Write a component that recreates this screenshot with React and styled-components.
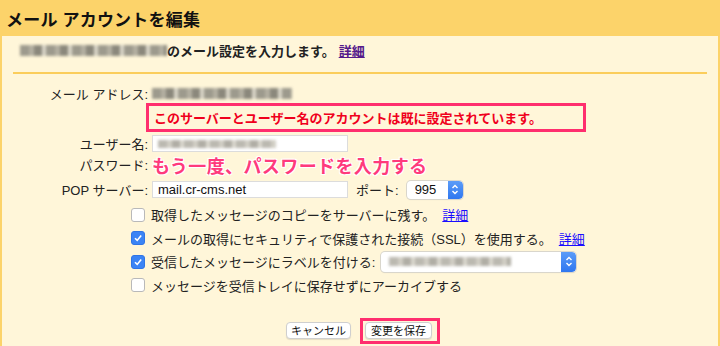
import React from 'react';
import styled, { createGlobalStyle } from 'styled-components';

const GlobalStyle = createGlobalStyle`
	html, body {
		margin: 0;
		padding: 0;
		background: #fff6d9;
	}
	body {
		width: 720px;
		height: 346px;
		overflow: hidden;
		font-family: 'Liberation Sans', 'Noto Sans CJK JP', sans-serif;
		color: #222;
	}
`;

const Page = styled.div`
	width: 720px;
	height: 346px;
	display: flex;
	flex-direction: column;
	background: #fcd36a;
`;

const Header = styled.h1`
	margin: 0;
	height: 36px;
	padding: 0 6px;
	display: flex;
	align-items: center;
	font-size: 17px;
	font-weight: 700;
	color: #111;
	letter-spacing: 0.2px;
`;

const Body = styled.div`
	flex: 1;
	margin: 0 2px;
	background: #fff6d9;
	display: flex;
	flex-direction: column;
`;

const Intro = styled.div`
	height: 28px;
	padding: 0 0 8px 18px;
	display: flex;
	align-items: center;
	font-size: 13px;
	font-weight: 700;
`;

const DetailLink = styled.a`
	color: ${({ visited }) => (visited ? '#551a8b' : '#1a0dff')};
	text-decoration: underline;
	margin-left: ${({ tight }) => (tight ? 1 : 4)}px;
	font-weight: ${({ bold }) => (bold ? 700 : 400)};
	cursor: pointer;
`;

const Rule = styled.hr`
	margin: 0 11px;
	height: 2px;
	border: none;
	background: #fbcd5b;
`;

const Blur = styled.span`
	display: inline-block;
	width: ${({ w }) => w}px;
	height: ${({ h }) => h || 10}px;
	background: repeating-linear-gradient(
		90deg,
		${({ dark }) => (dark ? '#8c8a80' : '#b0ada3')} 0 9px,
		${({ dark }) => (dark ? '#a7a498' : '#c9c6bb')} 9px 14px,
		${({ dark }) => (dark ? '#77756c' : '#a3a096')} 14px 22px,
		#d4d1c6 22px 26px
	);
	filter: blur(1.4px);
	opacity: 0.85;
`;

const Form = styled.div`
	display: grid;
	grid-template-columns: 146px 1fr;
	column-gap: 4px;
	padding-top: 10px;
	font-size: 13px;
`;

const Label = styled.div`
	grid-column: 1;
	height: ${({ h }) => h}px;
	display: flex;
	align-items: center;
	justify-content: flex-end;
	white-space: nowrap;
`;

const Value = styled.div`
	grid-column: 2;
	height: ${({ h }) => h}px;
	display: flex;
	align-items: center;
	gap: 8px;
`;

const Warning = styled.div`
	grid-column: 2;
	margin: 1px 0 2px -6px;
	width: 429px;
	height: 23px;
	border: 3px solid #ff2e6e;
	background: #fff6d9;
	display: flex;
	align-items: center;
	padding-left: 5px;
	font-size: 13px;
	font-weight: 700;
	color: #f0001c;
	box-sizing: content-box;
`;

const TextInput = styled.div`
	width: ${({ w }) => w}px;
	height: 17px;
	background: #fff;
	border: 1px solid #dcdcdc;
	box-sizing: border-box;
	display: flex;
	align-items: center;
	padding-left: 5px;
	font-size: 13px;
	color: #111;
`;

const Hint = styled.div`
	font-size: 18px;
	font-weight: 700;
	color: #ff3a7c;
	letter-spacing: 0.4px;
	text-shadow: 0 0 2px #fff, 1px 1px 0 #fff, -1px -1px 0 #fff, 1px -1px 0 #fff, -1px 1px 0 #fff;
`;

const Select = styled.div`
	width: ${({ w }) => w}px;
	height: ${({ h }) => h}px;
	background: #fff;
	border-radius: 4px;
	box-shadow: 0 0 0 1px #d9d6cc, 0 1px 1px rgba(0, 0, 0, 0.12);
	display: flex;
	align-items: center;
	justify-content: space-between;
	padding-left: 8px;
	box-sizing: border-box;
	font-size: 13px;
	color: #111;
	overflow: hidden;
`;

const Stepper = styled.span`
	width: 15px;
	height: 100%;
	background: linear-gradient(#5b9cf8, #2f77f0);
	display: flex;
	align-items: center;
	justify-content: center;
	border-radius: 0 4px 4px 0;
`;

const Port = styled.span`
	white-space: nowrap;
`;

const Options = styled.div`
	display: flex;
	flex-direction: column;
	padding-left: 129px;
	font-size: 13px;
`;

const OptionRow = styled.label`
	height: 23.5px;
	display: flex;
	align-items: center;
	gap: 6px;
	white-space: nowrap;
`;

const Box = styled.span`
	width: 14px;
	height: 14px;
	border-radius: 3px;
	box-sizing: border-box;
	background: ${({ checked }) => (checked ? '#3b84f5' : '#fff')};
	border: 1px solid ${({ checked }) => (checked ? '#2f75e6' : '#b9b9b9')};
	display: flex;
	align-items: center;
	justify-content: center;
	flex-shrink: 0;
`;

const Actions = styled.div`
	margin-top: auto;
	display: flex;
	justify-content: center;
	align-items: center;
	gap: 9px;
	padding-left: 6px;
	height: 27px;
	margin-bottom: 2px;
`;

const Button = styled.button`
	height: 17px;
	padding: 0 ${({ pad }) => pad}px;
	background: #fff;
	border: 1px solid #cfcfcf;
	border-radius: 4px;
	font-family: 'Noto Sans CJK JP', sans-serif;
	font-size: 11px;
	color: #111;
	line-height: 15px;
	box-shadow: 0 1px 1px rgba(0, 0, 0, 0.1);
`;

const Highlight = styled.div`
	border: 3px solid #ff2e6e;
	padding: 0 5px 0 2px;
	height: 20px;
	display: flex;
	align-items: center;
`;

const Chevrons = () => (
	<svg width="8" height="11" viewBox="0 0 8 11" fill="none" stroke="#fff" strokeWidth="1.4">
		<path d="M1.5 4 L4 1.5 L6.5 4" />
		<path d="M1.5 7 L4 9.5 L6.5 7" />
	</svg>
);

const Check = () => (
	<svg width="10" height="10" viewBox="0 0 10 10" fill="none" stroke="#fff" strokeWidth="1.6">
		<path d="M2 5.2 L4.2 7.4 L8.2 2.4" />
	</svg>
);

const Checkbox = ({ checked }) => <Box checked={checked}>{checked && <Check />}</Box>;

const options = [
	{ checked: false, text: '取得したメッセージのコピーをサーバーに残す。', link: true },
	{ checked: true, text: 'メールの取得にセキュリティで保護された接続（SSL）を使用する。', link: true },
	{ checked: true, text: '受信したメッセージにラベルを付ける:', select: true },
	{ checked: false, text: 'メッセージを受信トレイに保存せずにアーカイブする' },
];

const App = () => (
	<Page>
		<GlobalStyle />
		<Header>メール アカウントを編集</Header>
		<Body>
			<Intro>
				<Blur w={147} h={11} dark />
				<span>のメール設定を入力します。</span>
				<DetailLink visited bold>詳細</DetailLink>
			</Intro>
			<Rule />
			<Form>
				<Label h={18}>メール アドレス:</Label>
				<Value h={18}>
					<Blur w={140} h={11} dark />
				</Value>
				<Warning>このサーバーとユーザー名のアカウントは既に設定されています。</Warning>
				<Label h={19}>ユーザー名:</Label>
				<Value h={19}>
					<TextInput w={196}>
						<Blur w={118} h={8} />
					</TextInput>
				</Value>
				<Label h={23}>パスワード:</Label>
				<Value h={23}>
					<Hint>もう一度、パスワードを入力する</Hint>
				</Value>
				<Label h={27}>POP サーバー:</Label>
				<Value h={27}>
					<TextInput w={196}>mail.cr-cms.net</TextInput>
					<Port>ポート:</Port>
					<Select w={56} h={18}>
						995
						<Stepper>
							<Chevrons />
						</Stepper>
					</Select>
				</Value>
			</Form>
			<Options>
				{options.map(opt => (
					<OptionRow key={opt.text}>
						<Checkbox checked={opt.checked} />
						<span>{opt.text}</span>
						{opt.link && <DetailLink tight>詳細</DetailLink>}
						{opt.select && (
							<Select w={195} h={20}>
								<Blur w={122} h={9} />
								<Stepper>
									<Chevrons />
								</Stepper>
							</Select>
						)}
					</OptionRow>
				))}
			</Options>
			<Actions>
				<Button pad={4}>キャンセル</Button>
				<Highlight>
					<Button pad={5}>変更を保存</Button>
				</Highlight>
			</Actions>
		</Body>
	</Page>
);

export default App;
